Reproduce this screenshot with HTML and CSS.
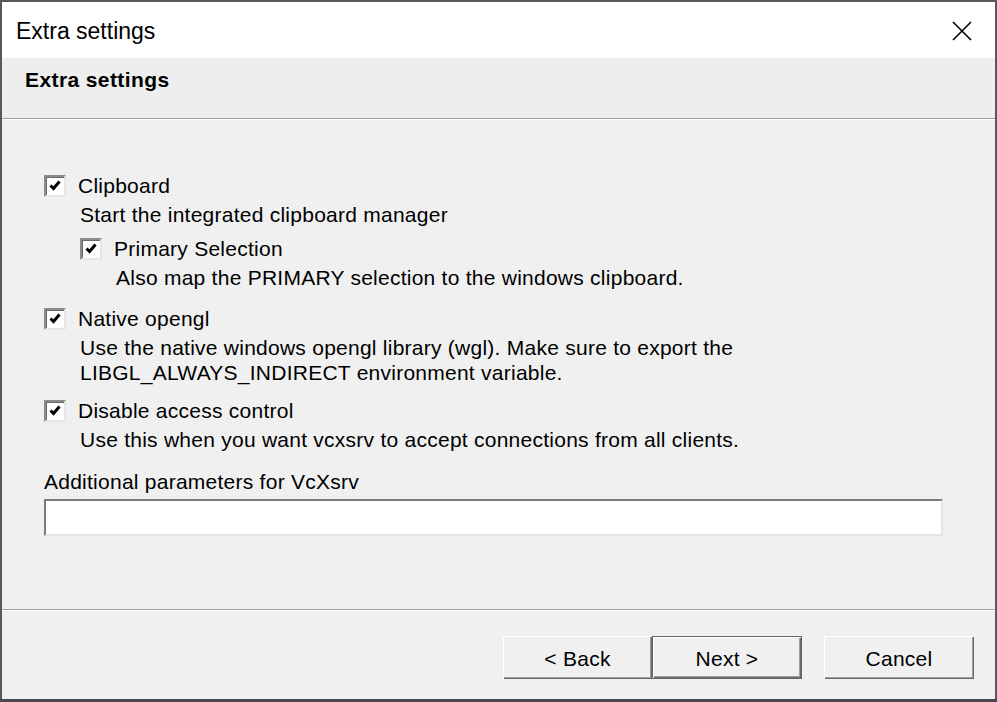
FILE: index.html
```html
<!DOCTYPE html>
<html lang="en">
<head>
    <meta charset="UTF-8">
    <title>Extra settings</title>
    <link rel="stylesheet" href="styles.css">
</head>
<body>
    <div class="window">
        <div class="titlebar">
            <span class="title">Extra settings</span>
            <svg class="close" width="20" height="20" viewBox="0 0 20 20">
                <path d="M1 1 L19 19 M19 1 L1 19" stroke="#000" stroke-width="1.6" fill="none"/>
            </svg>
        </div>

        <div class="header">Extra settings</div>

        <div class="content">
            <div class="option">
                <div class="check-row">
                    <span class="checkbox"><svg viewBox="0 0 18 18"><path d="M4.5 8.5 L7.5 11.5 L13.5 4.5" stroke="#000" stroke-width="3" fill="none"/></svg></span>
                    <span>Clipboard</span>
                </div>
                <div class="desc">Start the integrated clipboard manager</div>

                <div class="option sub">
                    <div class="check-row">
                        <span class="checkbox"><svg viewBox="0 0 18 18"><path d="M4.5 8.5 L7.5 11.5 L13.5 4.5" stroke="#000" stroke-width="3" fill="none"/></svg></span>
                        <span>Primary Selection</span>
                    </div>
                    <div class="desc">Also map the PRIMARY selection to the windows clipboard.</div>
                </div>
            </div>

            <div class="option tight">
                <div class="check-row">
                    <span class="checkbox"><svg viewBox="0 0 18 18"><path d="M4.5 8.5 L7.5 11.5 L13.5 4.5" stroke="#000" stroke-width="3" fill="none"/></svg></span>
                    <span>Native opengl</span>
                </div>
                <div class="desc">Use the native windows opengl library (wgl). Make sure to export the<br>LIBGL_ALWAYS_INDIRECT environment variable.</div>
            </div>

            <div class="option">
                <div class="check-row">
                    <span class="checkbox"><svg viewBox="0 0 18 18"><path d="M4.5 8.5 L7.5 11.5 L13.5 4.5" stroke="#000" stroke-width="3" fill="none"/></svg></span>
                    <span>Disable access control</span>
                </div>
                <div class="desc">Use this when you want vcxsrv to accept connections from all clients.</div>
            </div>

            <div class="param-label">Additional parameters for VcXsrv</div>
            <input class="param-input" type="text">
        </div>

        <div class="footer">
            <button class="btn">&lt; Back</button>
            <button class="btn default">Next &gt;</button>
            <button class="btn cancel">Cancel</button>
        </div>
    </div>
</body>
</html>
```

FILE: styles.css
```css
body {
    margin: 0;
    background: #4b474e;
    font-family: "Liberation Sans", Arial, sans-serif;
    color: #000;
}

.window {
    width: 993px;
    height: 697px;
    border: 2px solid #5a585c;
    border-bottom: none;
    background: #f0f0f0;
    display: flex;
    flex-direction: column;
}

.titlebar {
    height: 56px;
    background: #fff;
    display: flex;
    align-items: center;
    justify-content: space-between;
    padding: 0 23px 0 14px;
}

.title {
    font-size: 23px;
    margin-top: 3px;
}

.close {
    display: block;
    margin-top: 1px;
}

.header {
    height: 50px;
    padding: 10px 0 0 23px;
    background: #eeeeee;
    border-bottom: 1px solid #a0a0a0;
    box-shadow: 0 1px 0 #fff;
    font-size: 21px;
    font-weight: bold;
    letter-spacing: 0.4px;
    line-height: 24px;
}

.content {
    height: 435px;
    padding: 55px 0 0 42px;
    font-size: 21px;
    letter-spacing: 0.25px;
}

.option {
    margin-bottom: 17px;
}

.option.tight {
    margin-bottom: 14px;
}

.option.sub {
    margin: 10px 0 0 36px;
}

.option:last-of-type {
    margin-bottom: 0;
}

.check-row {
    display: flex;
    align-items: center;
    gap: 12px;
    height: 24px;
}

.checkbox {
    width: 18px;
    height: 18px;
    background: #fff;
    border-top: 2px solid #8c8c8c;
    border-left: 2px solid #8c8c8c;
    border-right: 2px solid #e6e6e6;
    border-bottom: 2px solid #e6e6e6;
    box-shadow: inset 1px 1px 0 #696969;
}

.checkbox svg {
    display: block;
    width: 18px;
    height: 18px;
}

.desc {
    margin: 4px 0 0 36px;
    line-height: 25px;
}

.param-label {
    margin-top: 17px;
    line-height: 25px;
}

.param-input {
    display: block;
    margin-top: 5px;
    width: 895px;
    height: 33px;
    padding: 0;
    background: #fff;
    border-top: 2px solid #7a7a7a;
    border-left: 2px solid #7a7a7a;
    border-right: 2px solid #e3e3e3;
    border-bottom: 2px solid #e3e3e3;
    outline: none;
}

.footer {
    flex: 1;
    border-top: 1px solid #a0a0a0;
    box-shadow: inset 0 1px 0 #fff;
    display: flex;
    align-items: flex-start;
    justify-content: flex-end;
    padding: 26px 21px 0 0;
}

.btn {
    width: 149px;
    height: 43px;
    padding: 2px 0 0;
    background: #f0f0f0;
    border: none;
    box-shadow: inset 1px 1px 0 #fff, inset -1px -1px 0 #696969, inset -2px -2px 0 #a0a0a0;
    font-family: "Liberation Sans", Arial, sans-serif;
    font-size: 21px;
    letter-spacing: 0.25px;
    color: #000;
}

.btn.default {
    width: 150px;
    box-shadow: inset 0 0 0 1px #646464, inset 2px 2px 0 #fff, inset -2px -2px 0 #696969, inset -3px -3px 0 #a0a0a0;
}

.btn.cancel {
    width: 150px;
    margin-left: 22px;
}
```
